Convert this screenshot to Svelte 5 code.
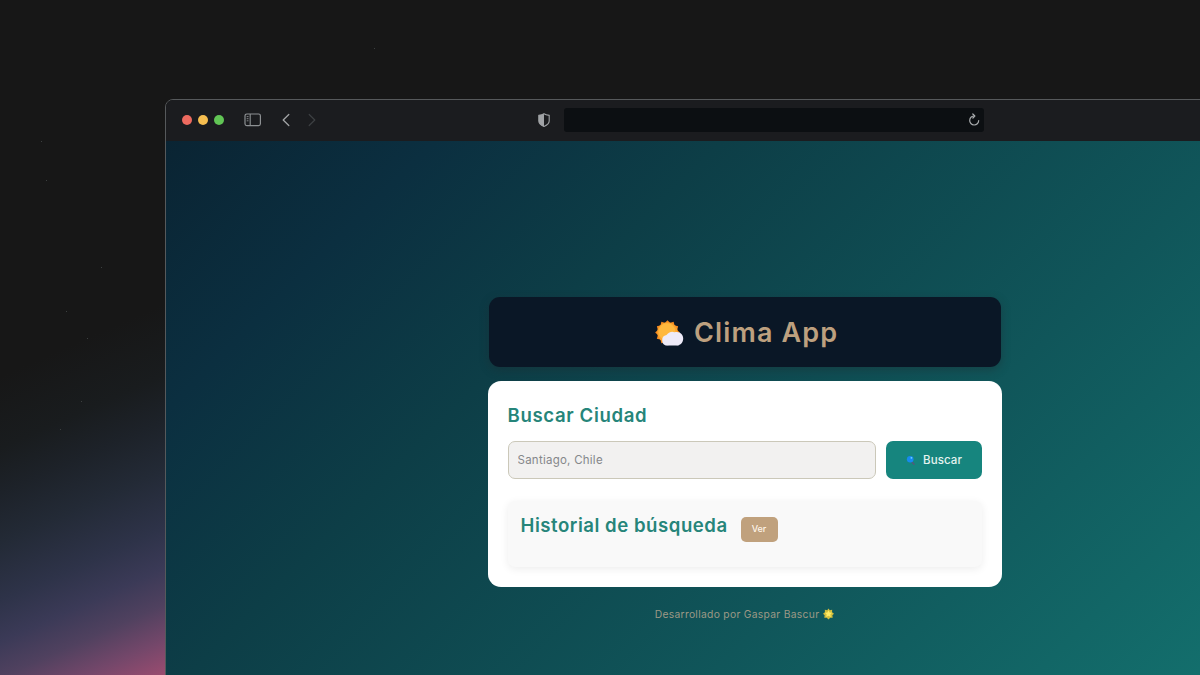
<script lang="ts">
  let city = $state('');
  const stars = [[374, 48], [101, 267], [41, 141], [46, 180], [66, 311], [87, 338], [81, 401], [60, 429]];
  const rays = Array.from({ length: 12 }, (_, i) => i * 30);
</script>

<div class="desktop">
  {#each stars as [x, y]}
    <i class="star" style="left:{x}px;top:{y}px"></i>
  {/each}

  <div class="window">
    <div class="toolbar">
      <div class="lights"><span class="red"></span><span class="yellow"></span><span class="green"></span></div>
      <svg class="sidebar" width="18" height="14" viewBox="0 0 18 14" fill="none" stroke="#8d9093">
        <rect x="1" y="1" width="15.4" height="11.6" rx="1.8" stroke-width="1.2" />
        <path d="M6.2 1v11.6" stroke-width="1.1" />
        <path d="M2.7 3.6h1.8M2.7 5.7h1.8M2.7 7.8h1.8" stroke-width=".9" />
      </svg>
      <svg class="back" width="8" height="14" viewBox="0 0 8 14" fill="none" stroke="#a1a3a5" stroke-width="1.3" stroke-linecap="round" stroke-linejoin="round"><path d="M6.8 1.5 1.2 7l5.6 5.5" /></svg>
      <svg class="forward" width="8" height="14" viewBox="0 0 8 14" fill="none" stroke="#3d4043" stroke-width="1.2" stroke-linecap="round" stroke-linejoin="round"><path d="m1.2 1.5 5.6 5.5-5.6 5.5" /></svg>
      <svg class="shield" width="12" height="14" viewBox="0 0 12 14">
        <path d="M6 .8c1.6 1 3.2 1.3 5.2 1.6V8c0 2.6-2.4 4.2-5.2 5.4C3.2 12.2.8 10.6.8 8V2.4C2.8 2.1 4.4 1.8 6 .8Z" fill="none" stroke="#a1a3a6" stroke-width="1.1" />
        <path d="M6 .8v12.6C3.2 12.2.8 10.6.8 8V2.4C2.8 2.1 4.4 1.8 6 .8Z" fill="#a1a3a6" />
      </svg>
      <div class="address">
        <svg width="12" height="13" viewBox="0 0 12 13" fill="none" stroke="#a8abad" stroke-width="1.2" stroke-linecap="round" stroke-linejoin="round">
          <path d="M6.6 3A4.500 4.500 0 1 0 10.700 7.500" />
          <path d="M4.800 1 6.800 3 4.900 5" />
        </svg>
      </div>
    </div>

    <main>
      <header>
        <svg class="weather" width="29" height="27" viewBox="0 0 29 27">
          <g transform="translate(12.500 12.500)">
            {#each rays as a}
              <path d="M-3-9.200 0-12.300 3-9.200Z" fill="#f58a1f" transform="rotate({a})" />
            {/each}
            <circle r="10.200" fill="#fba32f" />
            <circle cx="-.5" cy="-.8" r="8.500" fill="#ffb83d" />
          </g>
          <path d="M12.200 25.600a5.300 5.300 0 0 1-.7-10.500 6.300 6.300 0 0 1 8-2.800c5.200-1.500 8.700 2 8.700 6.200 0 4.400-3.200 7.100-6.700 7.100Z" fill="#eeebf8" />
          <path d="M10 25.100c4 .8 11 .6 14.800-.4-1 .6-2 .9-3.300.9h-9.300c-.8 0-1.500-.1-2.200-.5Z" fill="#d5d0e4" />
        </svg>
        <h1>Clima App</h1>
      </header>

      <section class="card">
        <h2 class="search-title">Buscar Ciudad</h2>
        <form onsubmit={(e) => e.preventDefault()}>
          <input bind:value={city} placeholder="Santiago, Chile" />
          <button class="search">
            <svg width="11" height="11" viewBox="0 0 11 11">
              <path d="m6.500 6.500 2.500 2.700" stroke="#55577c" stroke-width="1.500" stroke-linecap="round" />
              <circle cx="5.200" cy="4.300" r="3.300" fill="#168af0" />
              <circle cx="6.400" cy="2.800" r=".9" fill="#6ed3ff" />
            </svg>
            <span>Buscar</span>
          </button>
        </form>
        <div class="history">
          <h2 class="history-title">Historial de búsqueda</h2>
          <button class="show"><span>Ver</span></button>
        </div>
      </section>

      <footer>
        <span>Desarrollado por Gaspar Bascur</span>
        <svg width="11" height="12" viewBox="0 0 12 12">
          <path d="m6 0 1.400 2L10 1.400 9.900 4 12 5.600 10.200 7.400l.4 2.800-2.700-.2L6 12l-1.900-2-2.700.2.400-2.800L0 5.600 2.100 4 2 1.400l2.600.6Z" fill="#d3bf3d" />
          <path d="m6 1.800 1.200 2.500 2.700.3L8 6.500l.5 2.800L6 8l-2.500 1.300L4 6.500 2.100 4.600l2.700-.3Z" fill="#ffec65" />
        </svg>
      </footer>
    </main>
  </div>
</div>

<style>
  :global(body) { margin: 0; background: #171717; }
  .desktop {
    position: relative;
    box-sizing: border-box;
    width: 1200px;
    height: 675px;
    padding: 99px 0 0 165px;
    overflow: hidden;
    font-family: Inter, "Open Sans", sans-serif;
    background:
      linear-gradient(156deg, rgba(23, 23, 23, 0) 17%, #191c1e 33%, #1d2229 43%, #232a36 54%, #2e3349 67%, #3b3a57 76%, #50415f 84%, #74476a 92%, #9b4c70 100%) 0 300px / 167px 375px no-repeat,
      #171717;
  }
  .star { position: absolute; width: 1px; height: 1px; background: #3c4040; }
  .window {
    box-sizing: border-box;
    width: 1159px;
    height: 684px;
    border: 1px solid #56595b;
    border-radius: 8px 8px 0 0;
    overflow: hidden;
  }
  .toolbar { display: flex; align-items: center; box-sizing: border-box; height: 41px; padding: 0 0 2px 15.500px; background: #1b1c1f; }
  .toolbar svg { display: block; flex: none; }
  .lights { display: flex; gap: 6px; }
  .lights span { width: 10px; height: 10px; border-radius: 50%; }
  .red { background: #ed6a5f; }
  .yellow { background: #f6be50; }
  .green { background: #61c555; }
  .sidebar { margin-left: 20px; }
  .back { margin-left: 20.500px; }
  .forward { margin-left: 18px; }
  .shield { margin-left: 222px; }
  .address {
    display: flex;
    align-items: center;
    justify-content: flex-end;
    box-sizing: border-box;
    width: 420px;
    height: 24px;
    margin-left: 14px;
    padding-right: 4px;
    border-radius: 3px;
    background: #0c0f12;
  }
  main {
    display: flex;
    flex-direction: column;
    align-items: center;
    box-sizing: border-box;
    height: 641px;
    padding-top: 156px;
    background: linear-gradient(135deg, #0a2433 0%, #0b2f40 15%, #0d3e47 31%, #10565a 60%, #136e6c 87%, #147872 100%);
  }
  header {
    display: flex;
    align-items: center;
    justify-content: center;
    box-sizing: border-box;
    width: 512px;
    height: 70px;
    padding-left: 4px;
    border-radius: 11px;
    background: #0a1726;
    box-shadow: 0 3px 10px rgba(30, 40, 46, .4);
  }
  .weather { margin-top: 3px; }
  h1, h2 { margin: 0; white-space: nowrap; font-weight: 600; }
  h1 { margin: 2px 0 0 10px; width: 144px; color: #bda07f; font-size: 27px; line-height: 40px; letter-spacing: 1.150px; }
  .card {
    box-sizing: border-box;
    width: 514px;
    height: 206px;
    margin-top: 14px;
    padding: 20px;
    border-radius: 13px;
    background: #fff;
  }
  h2 { color: #26857a; font-size: 18.600px; line-height: 28px; }
  .search-title { letter-spacing: .64px; }
  form { display: flex; gap: 10px; margin-top: 12px; }
  input {
    box-sizing: border-box;
    width: 368px;
    height: 38px;
    padding: 0 9px;
    border: 1px solid #cbc8b9;
    border-radius: 7px;
    outline: 0;
    background: #f2f1f0;
    color: #555;
    font: 400 11.500px Inter, sans-serif;
    letter-spacing: .25px;
  }
  input::placeholder { color: #85878a; opacity: 1; }
  button { border: 0; padding: 0; font-family: inherit; color: #fff; }
  .search {
    display: flex;
    align-items: center;
    justify-content: center;
    gap: 7px;
    width: 96px;
    height: 38px;
    border-radius: 7px;
    background: #16857e;
    color: #e4f3ef;
    font-size: 11.500px;
    font-weight: 500;
    letter-spacing: .1px;
  }
  .history {
    display: flex;
    align-items: flex-start;
    box-sizing: border-box;
    width: 474px;
    height: 66px;
    margin-top: 22px;
    padding: 10px 13px;
    border-radius: 7px;
    background: #f9f9f9;
    box-shadow: 0 2px 8px rgba(0, 0, 0, .075);
  }
  .history-title { width: 207px; letter-spacing: .53px; }
  .show {
    width: 37px;
    height: 25px;
    margin: 6px 0 0 13px;
    border-radius: 5px;
    background: #c0a17d;
    color: #fff5e9;
    font-size: 9px;
    font-weight: 500;
  }
  .show span { display: block; margin-top: -2px; }
  footer {
    display: flex;
    align-items: center;
    gap: 4px;
    height: 16px;
    margin-top: 19px;
    color: #9d9986;
    font-size: 10.300px;
    letter-spacing: .3px;
    white-space: nowrap;
  }
</style>
